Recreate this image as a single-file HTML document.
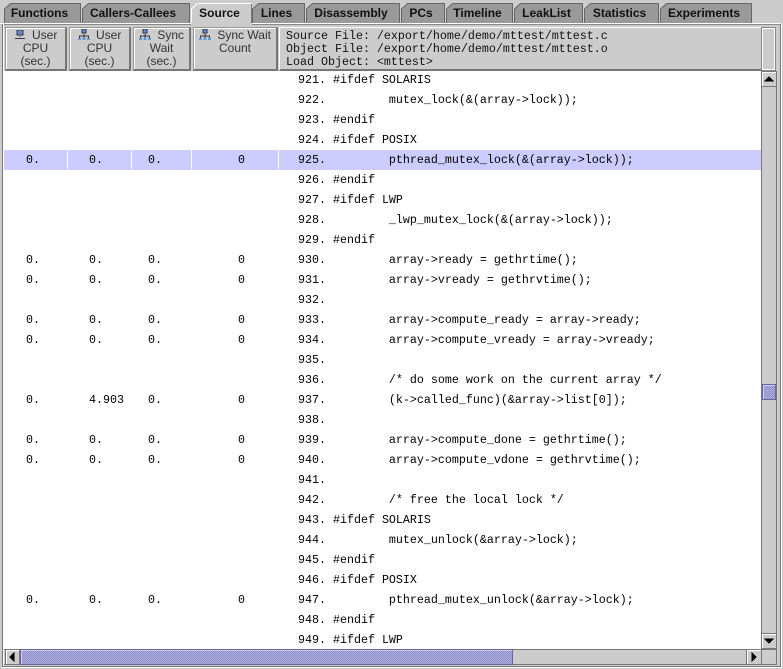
<!DOCTYPE html>
<html>
<head>
<meta charset="utf-8">
<style>
html,body{margin:0;padding:0;background:#ccc;}
#p{position:relative;width:783px;height:669px;overflow:hidden;background:#ccc;font-family:"Liberation Sans",sans-serif;color:#000;}
#p div{position:absolute;box-sizing:border-box;}
.t{top:3px;height:21px;font:bold 12px/20px "Liberation Sans",sans-serif;text-align:center;color:#111;}
.b{top:27px;height:44px;background:#ccc;border:1px solid #999;border-right:2px solid #777;border-bottom:2px solid #777;box-shadow:inset 1px 1px 0 #fff;font-size:12px;line-height:13px;text-align:center;color:#333;padding-top:1px;}
.b svg{vertical-align:-1px;margin-right:3px;}
#list{left:4px;top:71px;width:757px;height:578px;background:#fff;overflow:hidden;}
.r{left:0;width:757px;height:20px;font:11.67px/21px "Liberation Mono",monospace;white-space:pre;color:#000;}
.h{background:#ccf;}
.s{position:absolute;top:0;width:1px;height:19px;background:#fff;}
.n,.a,.c,.d,.l{position:absolute;top:0;white-space:pre;}
.a{left:22px;}.c{left:85px;}.d{left:144px;}.e{position:absolute;top:0;left:234px;}
.l{left:294px;}
.btn{background:#ccc;border:1px solid #777;box-shadow:inset 1px 1px 0 #fff;}
.thumb{background-color:#9c9cd2;background-image:conic-gradient(#8f8fc6 25%,#adade0 0 50%,#8f8fc6 0 75%,#adade0 0);background-size:2px 2px;border:1px solid #66669a;box-shadow:inset 1px 1px 0 #ccf;}
</style>
</head>
<body>
<div id="p">
<!-- tabs -->
<svg style="position:absolute;left:0;top:0" width="783" height="26">
<g fill="#999" stroke="#666">
<path d="M4.500 24V9L10.500 3.500H80.500V24z"/>
<path d="M82.500 24V9L88.500 3.500H189.500V24z"/>
<path d="M252.500 24V9L258.500 3.500H304.500V24z"/>
<path d="M306.500 24V9L312.500 3.500H399.500V24z"/>
<path d="M401.500 24V9L407.500 3.500H444.500V24z"/>
<path d="M446.500 24V9L452.500 3.500H512.500V24z"/>
<path d="M514.500 24V9L520.500 3.500H582.500V24z"/>
<path d="M584.500 24V9L590.500 3.500H658.500V24z"/>
<path d="M660.500 24V9L666.500 3.500H751.500V24z"/>
</g>
<path d="M191.500 24V9L197.500 3.500H251.500V24z" fill="#ccc" stroke="#fff"/>
<path d="M251.500 4V23" stroke="#777"/>
<rect x="0" y="23" width="781" height="1" fill="#fff"/>
<rect x="191" y="23" width="61" height="2" fill="#ccc"/>
<rect x="2" y="24" width="189" height="1" fill="#888"/>
<rect x="252" y="24" width="529" height="1" fill="#888"/>
</svg>
<div class="t" style="left:1px;width:77px">Functions</div>
<div class="t" style="left:79px;width:108px">Callers-Callees</div>
<div class="t" style="left:189px;width:61px">Source</div>
<div class="t" style="left:250px;width:53px">Lines</div>
<div class="t" style="left:304px;width:94px">Disassembly</div>
<div class="t" style="left:399px;width:44px">PCs</div>
<div class="t" style="left:444px;width:67px">Timeline</div>
<div class="t" style="left:512px;width:69px">LeakList</div>
<div class="t" style="left:582px;width:75px">Statistics</div>
<div class="t" style="left:658px;width:92px">Experiments</div>
<!-- frame -->
<div style="left:2px;top:24px;width:2px;height:643px;background:#777;border-right:1px solid #fff"></div>
<div style="left:780px;top:24px;width:1px;height:643px;background:#777"></div>
<div style="left:781px;top:24px;width:1px;height:644px;background:#fff"></div>
<div style="left:2px;top:666px;width:779px;height:1px;background:#777"></div>
<div style="left:2px;top:667px;width:780px;height:1px;background:#fff"></div>
<!-- headers -->
<div class="b" style="left:5px;width:62px"><svg width="12" height="10"><rect x="3" y="0" width="6" height="5" fill="#68c" stroke="#334"/><path d="M6 6V7M1 8.500H11" stroke="#334"/></svg> User<br>CPU<br>(sec.)</div>
<div class="b" style="left:69px;width:62px"><svg width="12" height="11"><rect x="4" y="0" width="4" height="4" fill="#68c" stroke="#334"/><path d="M6 5V7M1.500 9V7H10.500V9M6 7V9" stroke="#334" fill="none"/><path d="M0 9h3v2H0zM4.500 9h3v2h-3zM9 9h3v2H9z" fill="#69c"/></svg> User<br>CPU<br>(sec.)</div>
<div class="b" style="left:133px;width:58px"><svg width="12" height="11"><rect x="4" y="0" width="4" height="4" fill="#68c" stroke="#334"/><path d="M6 5V7M1.500 9V7H10.500V9M6 7V9" stroke="#334" fill="none"/><path d="M0 9h3v2H0zM4.500 9h3v2h-3zM9 9h3v2H9z" fill="#69c"/></svg> Sync<br>Wait<br>(sec.)</div>
<div class="b" style="left:193px;width:85px"><svg width="12" height="11"><rect x="4" y="0" width="4" height="4" fill="#68c" stroke="#334"/><path d="M6 5V7M1.500 9V7H10.500V9M6 7V9" stroke="#334" fill="none"/><path d="M0 9h3v2H0zM4.500 9h3v2h-3zM9 9h3v2H9z" fill="#69c"/></svg> Sync Wait<br>Count</div>
<div style="left:279px;top:27px;width:483px;height:44px;background:#ccc;border-top:1px solid #fff;border-left:1px solid #fff;border-bottom:2px solid #777;font:11.67px/13px 'Liberation Mono',monospace;white-space:pre;padding:2px 0 0 6px;color:#111">Source File: /export/home/demo/mttest/mttest.c
Object File: /export/home/demo/mttest/mttest.o
Load Object: &lt;mttest&gt;</div>
<div style="left:761px;top:27px;width:15px;height:44px;border:1px solid #888;box-shadow:inset -1px -1px 0 #fff,inset 1px 1px 0 #fff"></div>
<!-- list -->
<div id="list">
<div class="r" style="top:-1px"><span class="l">921. #ifdef SOLARIS</span></div>
<div class="r" style="top:19px"><span class="l">922.         mutex_lock(&amp;(array-&gt;lock));</span></div>
<div class="r" style="top:39px"><span class="l">923. #endif</span></div>
<div class="r" style="top:59px"><span class="l">924. #ifdef POSIX</span></div>
<div class="r h" style="top:79px"><i class="s" style="left:63px"></i><i class="s" style="left:127px"></i><i class="s" style="left:187px"></i><i class="s" style="left:274px"></i><span class="a">0.</span><span class="c">0.</span><span class="d">0.</span><span class="e">0</span><span class="l">925.         pthread_mutex_lock(&amp;(array-&gt;lock));</span></div>
<div class="r" style="top:99px"><span class="l">926. #endif</span></div>
<div class="r" style="top:119px"><span class="l">927. #ifdef LWP</span></div>
<div class="r" style="top:139px"><span class="l">928.         _lwp_mutex_lock(&amp;(array-&gt;lock));</span></div>
<div class="r" style="top:159px"><span class="l">929. #endif</span></div>
<div class="r" style="top:179px"><span class="a">0.</span><span class="c">0.</span><span class="d">0.</span><span class="e">0</span><span class="l">930.         array-&gt;ready = gethrtime();</span></div>
<div class="r" style="top:199px"><span class="a">0.</span><span class="c">0.</span><span class="d">0.</span><span class="e">0</span><span class="l">931.         array-&gt;vready = gethrvtime();</span></div>
<div class="r" style="top:219px"><span class="l">932.</span></div>
<div class="r" style="top:239px"><span class="a">0.</span><span class="c">0.</span><span class="d">0.</span><span class="e">0</span><span class="l">933.         array-&gt;compute_ready = array-&gt;ready;</span></div>
<div class="r" style="top:259px"><span class="a">0.</span><span class="c">0.</span><span class="d">0.</span><span class="e">0</span><span class="l">934.         array-&gt;compute_vready = array-&gt;vready;</span></div>
<div class="r" style="top:279px"><span class="l">935.</span></div>
<div class="r" style="top:299px"><span class="l">936.         /* do some work on the current array */</span></div>
<div class="r" style="top:319px"><span class="a">0.</span><span class="c">4.903</span><span class="d">0.</span><span class="e">0</span><span class="l">937.         (k-&gt;called_func)(&amp;array-&gt;list[0]);</span></div>
<div class="r" style="top:339px"><span class="l">938.</span></div>
<div class="r" style="top:359px"><span class="a">0.</span><span class="c">0.</span><span class="d">0.</span><span class="e">0</span><span class="l">939.         array-&gt;compute_done = gethrtime();</span></div>
<div class="r" style="top:379px"><span class="a">0.</span><span class="c">0.</span><span class="d">0.</span><span class="e">0</span><span class="l">940.         array-&gt;compute_vdone = gethrvtime();</span></div>
<div class="r" style="top:399px"><span class="l">941.</span></div>
<div class="r" style="top:419px"><span class="l">942.         /* free the local lock */</span></div>
<div class="r" style="top:439px"><span class="l">943. #ifdef SOLARIS</span></div>
<div class="r" style="top:459px"><span class="l">944.         mutex_unlock(&amp;array-&gt;lock);</span></div>
<div class="r" style="top:479px"><span class="l">945. #endif</span></div>
<div class="r" style="top:499px"><span class="l">946. #ifdef POSIX</span></div>
<div class="r" style="top:519px"><span class="a">0.</span><span class="c">0.</span><span class="d">0.</span><span class="e">0</span><span class="l">947.         pthread_mutex_unlock(&amp;array-&gt;lock);</span></div>
<div class="r" style="top:539px"><span class="l">948. #endif</span></div>
<div class="r" style="top:559px"><span class="l">949. #ifdef LWP</span></div>
</div>
<!-- vertical scrollbar -->
<div style="left:761px;top:71px;width:16px;height:578px;background:#ccc;border-left:1px solid #777;border-right:1px solid #777"></div>
<div class="btn" style="left:762px;top:71px;width:14px;height:16px;border-left:0;border-right:0"><svg width="14" height="14" style="display:block"><path d="M3 9L7 5L11 9z" fill="#000" stroke="#000"/></svg></div>
<div class="thumb" style="left:762px;top:384px;width:14px;height:16px"></div>
<div class="btn" style="left:762px;top:633px;width:14px;height:16px;border-left:0;border-right:0"><svg width="14" height="14" style="display:block"><path d="M3 5L7 9L11 5z" fill="#000" stroke="#000"/></svg></div>
<!-- horizontal scrollbar -->
<div style="left:4px;top:649px;width:773px;height:16px;background:#ccc;border-top:1px solid #777;border-bottom:1px solid #777"></div>
<div class="btn" style="left:5px;top:649px;width:15px;height:16px;border-top-color:#777"><svg width="13" height="14" style="display:block"><path d="M8 3L4 7L8 11z" fill="#000" stroke="#000"/></svg></div>
<div class="thumb" style="left:20px;top:649px;width:493px;height:16px"></div>
<div class="btn" style="left:746px;top:649px;width:16px;height:16px"><svg width="14" height="14" style="display:block"><path d="M5 3L9 7L5 11z" fill="#000" stroke="#000"/></svg></div>
<div style="left:776px;top:649px;width:1px;height:16px;background:#777"></div>
</div>
</body>
</html>
